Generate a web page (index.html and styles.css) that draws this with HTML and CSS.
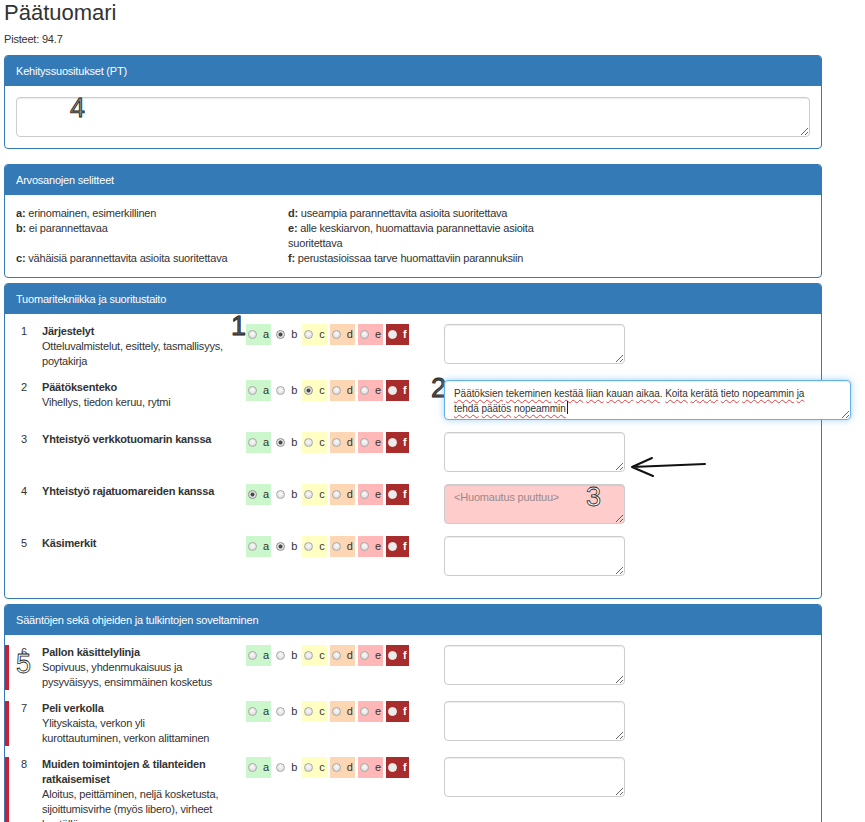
FILE: index.html
```html
<!DOCTYPE html>
<html lang="fi">
<head>
<meta charset="utf-8">
<title>Päätuomari</title>
<link rel="stylesheet" href="styles.css">
</head>
<body>
<div class="page">
  <h1 class="title">Päätuomari</h1>
  <div class="score">Pisteet: 94.7</div>

  <section class="panel panel-first">
    <div class="panel-heading">Kehityssuositukset (PT)</div>
    <div class="panel-body">
      <textarea class="ta ta-wide"></textarea>
    </div>
  </section>

  <section class="panel">
    <div class="panel-heading">Arvosanojen selitteet</div>
    <div class="panel-body legend">
      <div><b>a:</b> erinomainen, esimerkillinen</div>
      <div><b>d:</b> useampia parannettavita asioita suoritettava</div>
      <div><b>b:</b> ei parannettavaa</div>
      <div><b>e:</b> alle keskiarvon, huomattavia parannettavie asioita<br>suoritettava</div>
      <div><b>c:</b> vähäisiä parannettavita asioita suoritettava</div>
      <div><b>f:</b> perustasioissaa tarve huomattaviin parannuksiin</div>
    </div>
  </section>

  <section class="panel">
    <div class="panel-heading">Tuomaritekniikka ja suoritustaito</div>
    <div class="panel-body rows">
      <div class="item">
        <div class="num">1</div>
        <div class="desc"><div class="item-title">Järjestelyt</div>Otteluvalmistelut, esittely, tasmallisyys,<br>poytakirja</div>
        <div class="grades">
          <span class="g g-a"><i class="r"></i>a</span><span class="g g-b"><i class="r on"></i>b</span><span class="g g-c"><i class="r"></i>c</span><span class="g g-d"><i class="r"></i>d</span><span class="g g-e"><i class="r"></i>e</span><span class="g g-f"><i class="r"></i>f</span>
        </div>
        <div class="note"><textarea class="ta"></textarea></div>
      </div>
      <div class="item">
        <div class="num">2</div>
        <div class="desc"><div class="item-title">Päätöksenteko</div>Vihellys, tiedon keruu, rytmi</div>
        <div class="grades">
          <span class="g g-a"><i class="r"></i>a</span><span class="g g-b"><i class="r"></i>b</span><span class="g g-c"><i class="r on"></i>c</span><span class="g g-d"><i class="r"></i>d</span><span class="g g-e"><i class="r"></i>e</span><span class="g g-f"><i class="r"></i>f</span>
        </div>
        <div class="note">
          <div class="ta ta-focus"><span class="sp">Päätöksien</span> <span class="sp">tekeminen</span> <span class="sp">kestää</span> <span class="sp">liian</span> <span class="sp">kauan</span> <span class="sp">aikaa</span>. <span class="sp">Koita</span> <span class="sp">kerätä</span> <span class="sp">tieto</span> <span class="sp">nopeammin</span> <span class="sp">ja</span><br><span class="sp">tehdä</span> <span class="sp">päätös</span> <span class="sp">nopeammin</span><span class="caret"></span></div>
        </div>
      </div>
      <div class="item">
        <div class="num">3</div>
        <div class="desc"><div class="item-title">Yhteistyö verkkotuomarin kanssa</div></div>
        <div class="grades">
          <span class="g g-a"><i class="r"></i>a</span><span class="g g-b"><i class="r on"></i>b</span><span class="g g-c"><i class="r"></i>c</span><span class="g g-d"><i class="r"></i>d</span><span class="g g-e"><i class="r"></i>e</span><span class="g g-f"><i class="r"></i>f</span>
        </div>
        <div class="note"><textarea class="ta"></textarea></div>
      </div>
      <div class="item">
        <div class="num">4</div>
        <div class="desc"><div class="item-title">Yhteistyö rajatuomareiden kanssa</div></div>
        <div class="grades">
          <span class="g g-a"><i class="r on"></i>a</span><span class="g g-b"><i class="r"></i>b</span><span class="g g-c"><i class="r"></i>c</span><span class="g g-d"><i class="r"></i>d</span><span class="g g-e"><i class="r"></i>e</span><span class="g g-f"><i class="r"></i>f</span>
        </div>
        <div class="note"><textarea class="ta ta-missing" placeholder="<Huomautus puuttuu>"></textarea></div>
      </div>
      <div class="item">
        <div class="num">5</div>
        <div class="desc"><div class="item-title">Käsimerkit</div></div>
        <div class="grades">
          <span class="g g-a"><i class="r"></i>a</span><span class="g g-b"><i class="r on"></i>b</span><span class="g g-c"><i class="r"></i>c</span><span class="g g-d"><i class="r"></i>d</span><span class="g g-e"><i class="r"></i>e</span><span class="g g-f"><i class="r"></i>f</span>
        </div>
        <div class="note"><textarea class="ta"></textarea></div>
      </div>
    </div>
  </section>

  <section class="panel">
    <div class="panel-heading">Sääntöjen sekä ohjeiden ja tulkintojen soveltaminen</div>
    <div class="panel-body rows">
      <div class="item item-flag">
        <div class="num">6</div>
        <div class="desc"><div class="item-title">Pallon käsittelylinja</div>Sopivuus, yhdenmukaisuus ja<br>pysyväisyys, ensimmäinen kosketus</div>
        <div class="grades">
          <span class="g g-a"><i class="r"></i>a</span><span class="g g-b"><i class="r"></i>b</span><span class="g g-c"><i class="r"></i>c</span><span class="g g-d"><i class="r"></i>d</span><span class="g g-e"><i class="r"></i>e</span><span class="g g-f"><i class="r"></i>f</span>
        </div>
        <div class="note"><textarea class="ta"></textarea></div>
      </div>
      <div class="item item-flag">
        <div class="num">7</div>
        <div class="desc"><div class="item-title">Peli verkolla</div>Ylityskaista, verkon yli<br>kurottautuminen, verkon alittaminen</div>
        <div class="grades">
          <span class="g g-a"><i class="r"></i>a</span><span class="g g-b"><i class="r"></i>b</span><span class="g g-c"><i class="r"></i>c</span><span class="g g-d"><i class="r"></i>d</span><span class="g g-e"><i class="r"></i>e</span><span class="g g-f"><i class="r"></i>f</span>
        </div>
        <div class="note"><textarea class="ta"></textarea></div>
      </div>
      <div class="item item-flag">
        <div class="num">8</div>
        <div class="desc"><div class="item-title">Muiden toimintojen &amp; tilanteiden<br>ratkaisemiset</div>Aloitus, peittäminen, neljä kosketusta,<br>sijoittumisvirhe (myös libero), virheet<br>kentällä</div>
        <div class="grades">
          <span class="g g-a"><i class="r"></i>a</span><span class="g g-b"><i class="r"></i>b</span><span class="g g-c"><i class="r"></i>c</span><span class="g g-d"><i class="r"></i>d</span><span class="g g-e"><i class="r"></i>e</span><span class="g g-f"><i class="r"></i>f</span>
        </div>
        <div class="note"><textarea class="ta"></textarea></div>
      </div>
    </div>
  </section>
</div>

<span class="mark mark-solid mark-1">1</span>
<span class="mark mark-solid mark-2">2</span>
<span class="mark mark-hollow mark-3">3</span>
<span class="mark mark-grey mark-4">4</span>
<span class="mark mark-hollow mark-5">5</span>
<svg class="arrow" width="80" height="24" viewBox="0 0 80 24" aria-hidden="true">
  <path d="M77 9 L4 12 M4 12 L24 3 M4 12 L25 21" fill="none" stroke="#111" stroke-width="2" stroke-linecap="round"/>
</svg>
</body>
</html>
```

FILE: styles.css
```css
html {
  overflow: hidden;
}

body {
  margin: 0;
  position: relative;
  font-family: "Liberation Sans", Arial, sans-serif;
  font-size: 11px;
  line-height: 15px;
  letter-spacing: -0.2px;
  color: #333;
  background: #fff;
}

.page {
  margin-left: 4px;
  width: 818px;
}

.title {
  margin: 0;
  font-size: 22px;
  font-weight: normal;
  line-height: 25px;
  letter-spacing: 0;
  color: #333;
}

.score {
  margin-top: 7px;
  margin-bottom: 8px;
}

.panel {
  border: 1px solid #337ab7;
  border-radius: 4px;
  margin-bottom: 5px;
  background: #fff;
}

.panel-first {
  margin-bottom: 15px;
}

.panel-heading {
  background: #337ab7;
  color: #fff;
  padding: 8px 11px;
  line-height: 14px;
  border-radius: 3px 3px 0 0;
}

.panel-body {
  padding: 11px;
}

.legend {
  display: grid;
  grid-template-columns: 272px 1fr;
}

.legend b {
  font-weight: bold;
}

.ta {
  display: block;
  box-sizing: border-box;
  height: 40px;
  width: 100%;
  margin: 0;
  border: 1px solid #ccc;
  border-radius: 4px;
  box-shadow: inset 0 1px 1px rgba(0, 0, 0, 0.075);
  padding: 5px 9px;
  font: inherit;
  letter-spacing: inherit;
  color: #333;
  background: #fff;
  resize: vertical;
}

.ta-wide {
  width: 100%;
}

.ta-missing {
  background: #ffcccc;
}

.ta-missing::placeholder {
  color: #9a8a8a;
}

.ta-focus {
  width: 407px;
  height: 40px;
  padding: 5px 9px;
  font-size: 10px;
  letter-spacing: -0.05px;
  border-color: #66afe9;
  box-shadow: inset 0 1px 1px rgba(0, 0, 0, 0.075), 0 0 7px rgba(102, 175, 233, 0.6);
  white-space: nowrap;
  overflow: hidden;
  resize: both;
  position: relative;
  z-index: 1;
}

.sp {
  text-decoration: underline wavy #e0403f;
  text-decoration-thickness: 1px;
  text-underline-offset: 2px;
}

.caret {
  display: inline-block;
  width: 1px;
  height: 13px;
  background: #222;
  vertical-align: -2px;
  margin-left: 1px;
}

.rows {
  padding: 10px 0;
}

.item {
  display: grid;
  grid-template-columns: 21px 204px 198px 181px;
  align-items: start;
  border-left: 4px solid transparent;
  padding-left: 12px;
  margin-bottom: 11px;
  min-height: 41px;
}

.item-flag {
  border-left-color: #cc1e2e;
}

.item-title {
  font-weight: bold;
}

.grades {
  display: flex;
  gap: 3px;
}

.g {
  display: flex;
  align-items: center;
  height: 21px;
  padding: 0 2px;
  gap: 6px;
  color: #333;
  letter-spacing: 0;
}

.g-a { background: #ccf7cc; }
.g-c { background: #ffffc4; }
.g-d { background: #fdd6b4; }
.g-e { background: #ffb7b7; }
.g-f { background: #a82c2c; color: #fff; font-weight: bold; }

.r {
  display: block;
  box-sizing: border-box;
  width: 9px;
  height: 9px;
  border-radius: 50%;
  border: 1px solid #a9a9a9;
  background: radial-gradient(circle at 50% 40%, #fbfbfb 0, #dedede 75%);
}

.r.on {
  border-color: #8f8f8f;
  background: radial-gradient(circle, #4a4a4a 0, #4a4a4a 1.6px, #e6e6e6 2.4px);
}

.g-f .r {
  border-color: #e6e6e6;
  background: #ececec;
}

.mark {
  position: absolute;
  font-family: "Liberation Sans", sans-serif;
  font-size: 27px;
  line-height: 28px;
  font-weight: normal;
  letter-spacing: 0;
}

.mark-solid {
  color: #555;
  -webkit-text-stroke: 0.8px #222;
}

.mark-grey {
  color: #8a8a8a;
  -webkit-text-stroke: 0.8px #222;
}

.mark-hollow {
  color: #fff;
  -webkit-text-stroke: 0.8px #222;
}

.mark-1 { left: 231px; top: 312px; }
.mark-2 { left: 431px; top: 374px; }
.mark-3 { left: 586px; top: 483px; }
.mark-4 { left: 70px; top: 94px; }
.mark-5 { left: 16px; top: 650px; }

.arrow {
  position: absolute;
  left: 628px;
  top: 455px;
}
```
